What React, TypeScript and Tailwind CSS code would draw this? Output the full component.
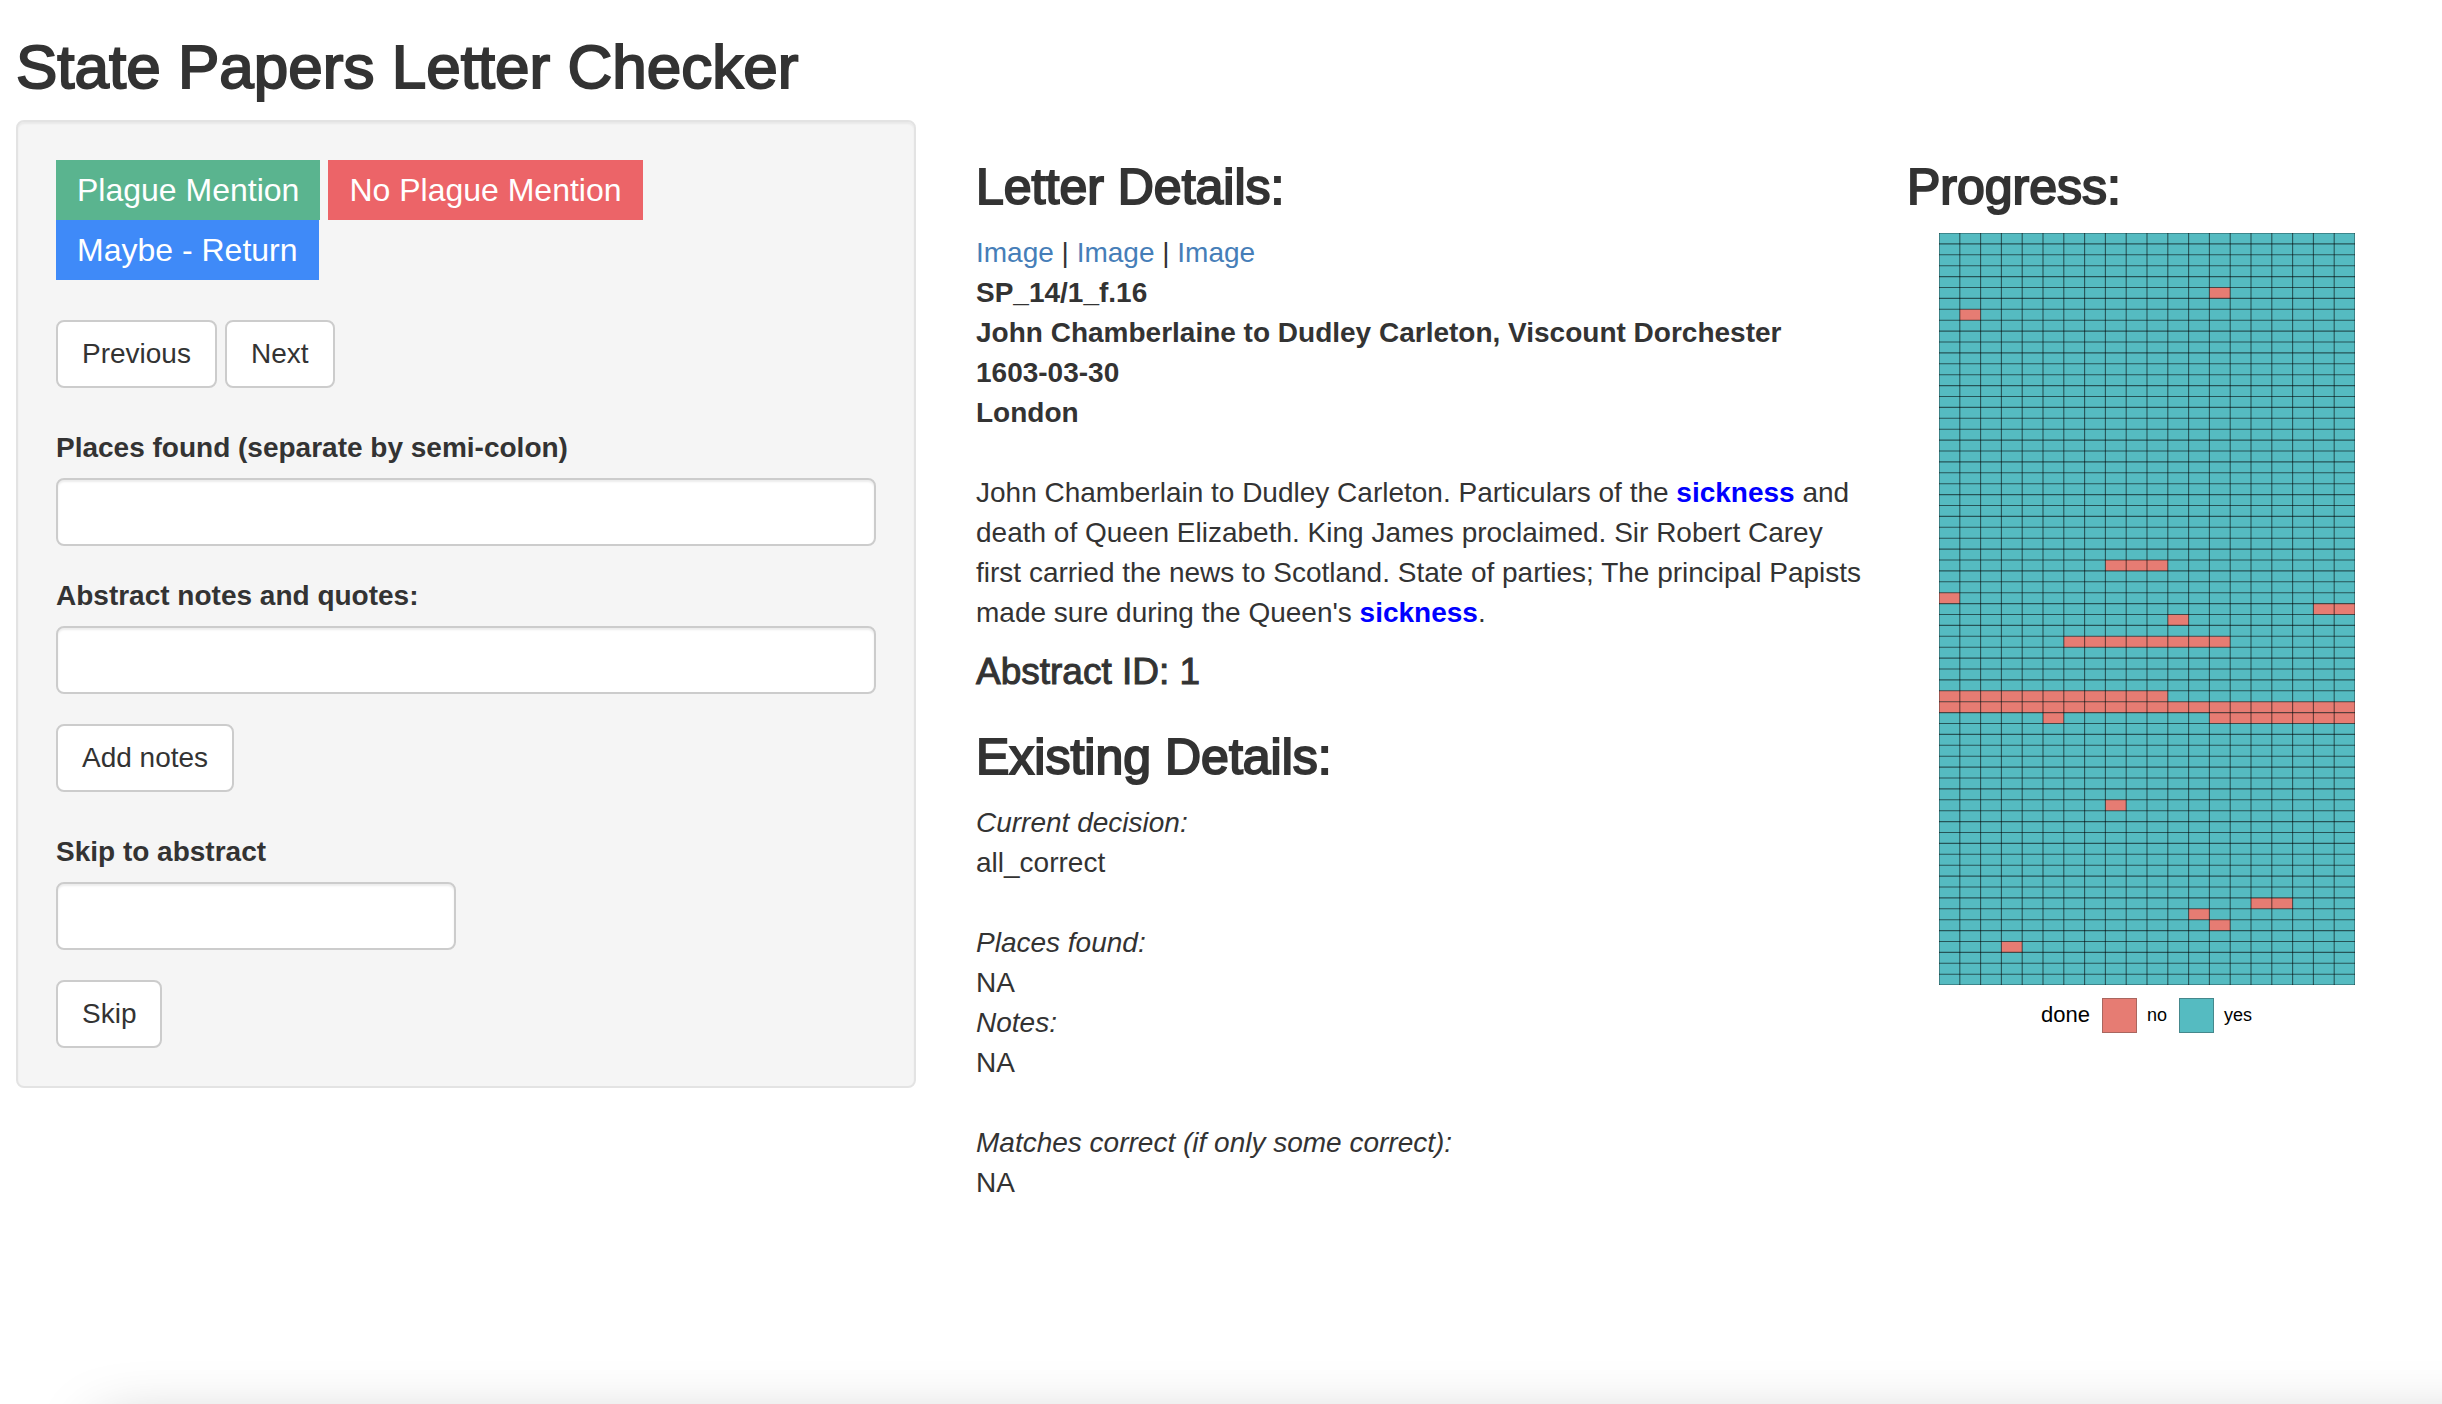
import React from 'react';

const COLS = 20;
const ROWS = 69;
const CELL_W = 20.8;
const CELL_H = 10.9;

// [row, first column, last column] of the abstracts still to be checked
const TODO_RUNS: [number, number, number][] = [
  [5, 13, 13],
  [7, 1, 1],
  [30, 8, 10],
  [33, 0, 0],
  [34, 18, 19],
  [35, 11, 11],
  [37, 6, 13],
  [42, 0, 10],
  [43, 0, 19],
  [44, 5, 5],
  [44, 13, 19],
  [52, 8, 8],
  [61, 15, 16],
  [62, 12, 12],
  [63, 13, 13],
  [65, 3, 3],
];

function ProgressChart() {
  const w = COLS * CELL_W;
  const h = ROWS * CELL_H;
  return (
    <svg
      viewBox={`0 0 ${w} ${h}`}
      className="block w-[416px] max-w-full"
      role="img"
      aria-label="Progress by abstract"
    >
      <rect width={w} height={h} fill="#55bbc1" />
      {TODO_RUNS.map(([row, from, to]) => (
        <rect
          key={`${row}-${from}`}
          x={from * CELL_W}
          y={row * CELL_H}
          width={(to - from + 1) * CELL_W}
          height={CELL_H}
          fill="#e67c73"
        />
      ))}
      <g stroke="#000" strokeOpacity="0.55" strokeWidth="1.1">
        {Array.from({ length: COLS + 1 }, (_, i) => (
          <line key={`c${i}`} x1={i * CELL_W} x2={i * CELL_W} y1={0} y2={h} />
        ))}
        {Array.from({ length: ROWS + 1 }, (_, i) => (
          <line key={`r${i}`} x1={0} x2={w} y1={i * CELL_H} y2={i * CELL_H} />
        ))}
      </g>
    </svg>
  );
}

const button =
  'h-[68px] cursor-pointer rounded-lg border-2 border-[#ccc] bg-white px-6 text-[28px] leading-10 text-[#333]';
const input =
  'block h-[68px] rounded-lg border-2 border-[#ccc] bg-white px-6 text-[28px] text-[#555] shadow-[inset_0_2px_2px_rgba(0,0,0,0.075)] outline-none';
const label = 'mb-[10px] block font-bold';
const decision = 'h-[60px] cursor-pointer px-[21px] text-[32px] leading-10 text-white';
const heading = 'mb-5 text-[50px] leading-[52px] [-webkit-text-stroke:2px_#333]';
const link = 'text-[#467eb8]';

export default function App() {
  return (
    <div className="relative min-h-screen overflow-hidden bg-white pt-[34px] pr-14 pl-4 font-['Liberation_Sans',Arial,sans-serif] text-[28px] leading-10 text-[#333]">
      <h1 className="mb-5 text-[62px] leading-[66px] [-webkit-text-stroke:2px_#333]">
        State Papers Letter Checker
      </h1>

      <div className="grid grid-cols-[900fr_931fr_479fr] items-start gap-x-[30px]">
        <form
          className="rounded-lg border-2 border-[#e3e3e3] bg-[#f5f5f5] p-[38px] shadow-[inset_0_2px_2px_rgba(0,0,0,0.05)]"
          onSubmit={(e) => e.preventDefault()}
        >
          <div className="flex max-w-[640px] flex-wrap gap-x-2">
            <button type="button" className={`${decision} bg-[#5ab48f]`}>
              Plague Mention
            </button>
            <button type="button" className={`${decision} bg-[#ec6468]`}>
              No Plague Mention
            </button>
            <button type="button" className={`${decision} bg-[#3f8af8]`}>
              Maybe - Return
            </button>
          </div>

          <div className="mt-10 flex gap-2">
            <button type="button" className={button}>
              Previous
            </button>
            <button type="button" className={button}>
              Next
            </button>
          </div>

          <div className="mt-10">
            <label htmlFor="places" className={label}>
              Places found (separate by semi-colon)
            </label>
            <input id="places" type="text" className={`${input} w-full`} />
          </div>

          <div className="mt-[30px]">
            <label htmlFor="notes" className={label}>
              Abstract notes and quotes:
            </label>
            <input id="notes" type="text" className={`${input} w-full`} />
          </div>

          <button type="button" className={`${button} mt-[30px] block`}>
            Add notes
          </button>

          <div className="mt-10">
            <label htmlFor="skip" className={label}>
              Skip to abstract
            </label>
            <input id="skip" type="text" className={`${input} w-[400px]`} />
          </div>

          <button type="button" className={`${button} mt-[30px] block`}>
            Skip
          </button>
        </form>

        <main className="pt-[41px] pl-[30px]">
          <h2 className={heading}>Letter Details:</h2>
          <p>
            <a href="#image-1" className={link}>
              Image
            </a>
            {' | '}
            <a href="#image-2" className={link}>
              Image
            </a>
            {' | '}
            <a href="#image-3" className={link}>
              Image
            </a>
          </p>
          <div className="font-bold">
            <p>SP_14/1_f.16</p>
            <p>John Chamberlaine to Dudley Carleton, Viscount Dorchester</p>
            <p>1603-03-30</p>
            <p>London</p>
          </div>
          <p className="mt-10 pr-1">
            John Chamberlain to Dudley Carleton. Particulars of the{' '}
            <b className="text-[#0000ff]">sickness</b> and death of Queen Elizabeth. King James
            proclaimed. Sir Robert Carey first carried the news to Scotland. State of parties; The
            principal Papists made sure during the Queen's{' '}
            <b className="text-[#0000ff]">sickness</b>.
          </p>
          <h3 className="mt-5 text-[37px] leading-[38px] [-webkit-text-stroke:1px_#333]">
            Abstract ID: 1
          </h3>

          <h2 className={`${heading} mt-10`}>Existing Details:</h2>
          <p className="italic">Current decision:</p>
          <p>all_correct</p>
          <p className="mt-10 italic">Places found:</p>
          <p>NA</p>
          <p className="italic">Notes:</p>
          <p>NA</p>
          <p className="mt-10 italic">Matches correct (if only some correct):</p>
          <p>NA</p>
        </main>

        <section className="pt-[41px]">
          <h2 className={heading}>Progress:</h2>
          <div className="flex flex-col items-center gap-3">
            <ProgressChart />
            <div className="flex items-center text-[18px] leading-9 text-black">
              <span className="mr-3 text-[22px]">done</span>
              <span className="mr-[10px] size-[35px] border border-[#a9665f] bg-[#e67c73]" />
              <span className="mr-3">no</span>
              <span className="mr-[10px] size-[35px] border border-[#45888c] bg-[#55bbc1]" />
              <span>yes</span>
            </div>
          </div>
        </section>
      </div>

      <div className="absolute top-full right-0 left-[100px] mt-6 -mr-24 h-24 shadow-[0_0_64px_rgba(0,0,0,0.28)]" />
    </div>
  );
}
